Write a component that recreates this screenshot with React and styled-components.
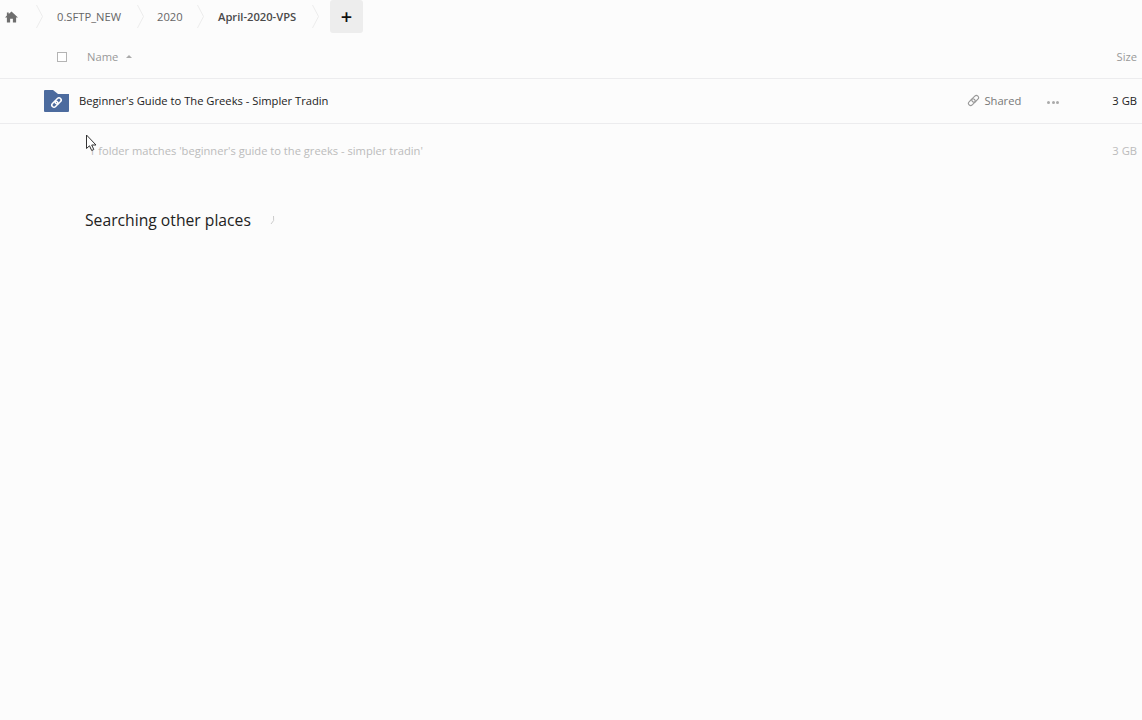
import styled, { createGlobalStyle } from 'styled-components';

const Global = createGlobalStyle`
  * { box-sizing: border-box; margin: 0; padding: 0; }
  html, body { background: #fcfcfc; }
  body { font-family: "Open Sans", sans-serif; font-size: 11px; color: #222; overflow: hidden; }
`;

const Page = styled.div`
  position: relative;
  width: 1142px;
  height: 720px;
  background: #fcfcfc;
`;

const Breadcrumbs = styled.nav`
  display: flex;
  align-items: flex-start;
  height: 34px;
`;

const Crumb = styled.div`
  display: flex;
  align-items: center;
  height: 33px;
  padding-left: ${(p) => p.$left}px;
  width: ${(p) => p.$width}px;
  font-size: 11.2px;
  font-weight: ${(p) => (p.$current ? 600 : 400)};
  color: ${(p) => (p.$current ? '#4a4a4a' : '#666')};
  white-space: nowrap;
`;

const Chevron = styled.svg`
  flex: none;
  width: 8px;
  height: 33px;
`;

const AddButton = styled.div`
  display: flex;
  align-items: center;
  justify-content: center;
  width: 33px;
  height: 33px;
  margin-left: 10px;
  background: #ededed;
  border-radius: 3px;
  font-size: 20px;
  font-weight: 600;
  line-height: 1;
  color: #111;
`;

const HeadRow = styled.div`
  display: flex;
  align-items: center;
  height: 45px;
  border-bottom: 1px solid #ececee;
  color: #999;
  font-size: 11.2px;
`;

const Checkbox = styled.span`
  width: 10px;
  height: 10px;
  margin-left: 57px;
  margin-top: 1px;
  border: 1px solid #b4b4b4;
  background: #fff;
`;

const NameHead = styled.span`
  display: flex;
  align-items: center;
  gap: 8px;
  margin-left: 20px;
  flex: 1;
`;

const SortCaret = styled.span`
  width: 0;
  height: 0;
  border-left: 3.5px solid transparent;
  border-right: 3.5px solid transparent;
  border-bottom: 3.5px solid #aaa;
`;

const SizeCell = styled.span`
  flex: none;
  margin-right: 5px;
  font-size: 11.2px;
`;

const FileRow = styled.div`
  display: flex;
  align-items: center;
  height: 45px;
  border-bottom: 1px solid #ececee;
  padding-left: 44px;
`;

const FileName = styled.span`
  flex: 1;
  margin-left: 10px;
  margin-top: -1px;
  font-size: 11.2px;
  color: #222;
`;

const Shared = styled.span`
  display: flex;
  align-items: center;
  gap: 4px;
  margin-top: -1px;
  color: #777;
  font-size: 11.2px;
`;

const More = styled.span`
  display: flex;
  gap: 1.5px;
  margin-left: 26px;
  margin-top: 2px;
  width: 65px;
`;

const Dot = styled.i`
  width: 3px;
  height: 3px;
  border-radius: 50%;
  background: #aaa;
`;

const Strong = styled(SizeCell)`
  color: #222;
  margin-top: -1px;
`;

const SummaryRow = styled.div`
  display: flex;
  align-items: center;
  height: 53px;
  padding-left: 89px;
  color: #bbb;
  font-size: 11.15px;
`;

const SummaryText = styled.span`
  flex: 1;
`;

const Searching = styled.div`
  display: flex;
  align-items: center;
  gap: 19px;
  margin-top: 27px;
  padding-left: 85px;
  height: 32px;
  font-size: 15.7px;
  color: #222;
`;

const Cursor = styled.svg`
  position: absolute;
  left: 85px;
  top: 134px;
`;

const ChevronIcon = () => (
  <Chevron viewBox="0 0 8 33">
    <path d="M0.5 5 L6.5 16.5 L0.5 28" fill="none" stroke="#ececec" strokeWidth="1" />
  </Chevron>
);

const FolderIcon = () => (
  <svg width="25" height="22" viewBox="0 0 25 22">
    <path d="M0 1 Q0 0 1 0 H9 L14 4 H25 V21 Q25 22 24 22 H1 Q0 22 0 21 Z" fill="#4c6b9e" />
    <g fill="none" stroke="#fff" strokeWidth="1.5" transform="rotate(-45 12.5 12.5)">
      <rect x="6.8" y="10.3" width="6.8" height="4.4" rx="2.2" />
      <rect x="11.4" y="10.3" width="6.8" height="4.4" rx="2.2" />
    </g>
  </svg>
);

const LinkIcon = () => (
  <svg width="13" height="13" viewBox="0 0 13 13" fill="none" stroke="#999" strokeWidth="1.1">
    <g transform="rotate(-45 6.5 6.5)">
      <rect x="0.3" y="4.3" width="7.6" height="4.4" rx="2.2" />
      <rect x="5.1" y="4.3" width="7.6" height="4.4" rx="2.2" />
    </g>
  </svg>
);

export default function App() {
  return (
    <Page>
      <Global />
      <Breadcrumbs>
        <Crumb $left={5} $width={36}>
          <svg width="13" height="12" viewBox="0 0 14 13">
            <path d="M7 0.5 L14 7 H12 V12.5 H8.5 V8.5 H5.5 V12.5 H2 V7 H0 L2 5 V1.5 H4 V3.2 Z" fill="#6e6e6e" />
          </svg>
        </Crumb>
        <ChevronIcon />
        <Crumb $left={13} $width={93}>0.SFTP_NEW</Crumb>
        <ChevronIcon />
        <Crumb $left={12} $width={52}>2020</Crumb>
        <ChevronIcon />
        <Crumb $left={13} $width={107} $current>April-2020-VPS</Crumb>
        <ChevronIcon />
        <AddButton>+</AddButton>
      </Breadcrumbs>
      <HeadRow>
        <Checkbox />
        <NameHead>Name <SortCaret /></NameHead>
        <SizeCell>Size</SizeCell>
      </HeadRow>
      <FileRow>
        <FolderIcon />
        <FileName>Beginner's Guide to The Greeks - Simpler Tradin</FileName>
        <Shared><LinkIcon /> Shared</Shared>
        <More><Dot /><Dot /><Dot /></More>
        <Strong>3 GB</Strong>
      </FileRow>
      <SummaryRow>
        <SummaryText>1 folder matches 'beginner's guide to the greeks - simpler tradin'</SummaryText>
        <SizeCell>3 GB</SizeCell>
      </SummaryRow>
      <Searching>
        Searching other places
        <svg width="6" height="10" viewBox="0 0 6 10">
          <path d="M3.5 1 Q5 6 1 9" fill="none" stroke="#ccc" strokeWidth="1" />
        </svg>
      </Searching>
      <Cursor width="13" height="18" viewBox="0 0 13 18">
        <path d="M1.5 1 V14.5 L4.5 11.8 L6.7 16.5 L8.8 15.5 L6.7 11 H11 Z" fill="#fff" stroke="#333" strokeWidth="1" />
      </Cursor>
    </Page>
  );
}
